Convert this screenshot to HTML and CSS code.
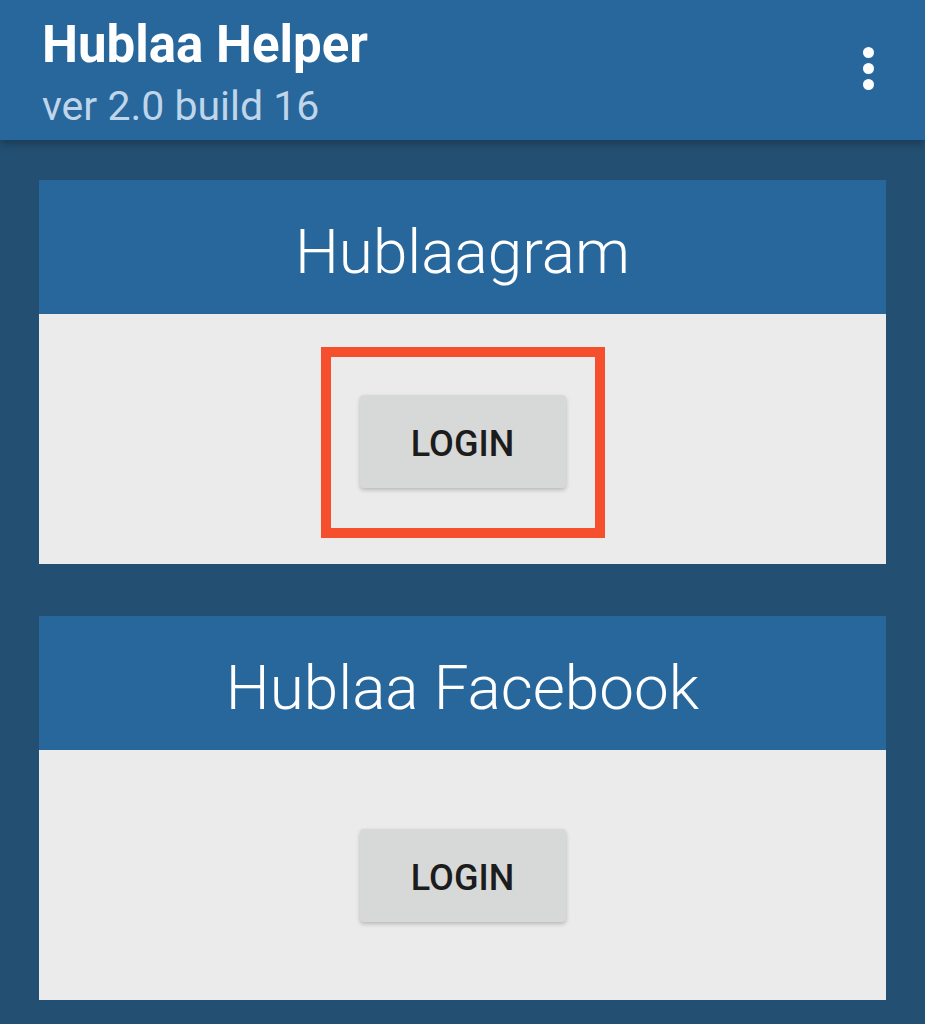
FILE: index.html
```html
<!DOCTYPE html>
<html>
<head>
<meta charset="utf-8">
<link rel="stylesheet" href="styles.css">
</head>
<body>
<header class="appbar">
  <div class="titles">
    <div class="title">Hublaa Helper</div>
    <div class="subtitle">ver 2.0 build 16</div>
  </div>
  <div class="menu"><span></span><span></span><span></span></div>
</header>
<main class="content">
  <section class="card">
    <div class="card-head">Hublaagram</div>
    <div class="card-body">
      <div class="highlight">
        <button class="btn">LOGIN</button>
      </div>
    </div>
  </section>
  <section class="card">
    <div class="card-head">Hublaa Facebook</div>
    <div class="card-body">
      <button class="btn">LOGIN</button>
    </div>
  </section>
</main>
</body>
</html>
```
FILE: styles.css
```css
html, body {
  margin: 0;
  padding: 0;
  height: 100%;
}
body {
  background: #234f72;
  font-family: Roboto, "Noto Sans", sans-serif;
  overflow: hidden;
}
.appbar {
  height: 140px;
  background: #27679c;
  display: flex;
  justify-content: space-between;
  align-items: flex-start;
  padding: 0 42px 0 42px;
  box-sizing: border-box;
  box-shadow: 0 4px 8px rgba(0,0,0,0.25);
  position: relative;
  z-index: 1;
}
.titles {
  padding-top: 16px;
}
.title {
  color: #ffffff;
  font-weight: 700;
  font-size: 51px;
  line-height: 58px;
}
.subtitle {
  color: #bfd5ea;
  font-size: 41px;
  line-height: 48px;
  margin-top: 8px;
}
.menu {
  display: flex;
  flex-direction: column;
  gap: 5px;
  margin-top: 47px;
  margin-right: 9px;
}
.menu span {
  width: 11px;
  height: 11px;
  border-radius: 50%;
  background: #ffffff;
}
.content {
  padding: 40px 39px 0 39px;
  display: flex;
  flex-direction: column;
  gap: 52px;
}
.card {
  display: flex;
  flex-direction: column;
}
.card-head {
  height: 134px;
  background: #27679c;
  color: #ffffff;
  font-weight: 300;
  font-size: 62px;
  display: flex;
  align-items: center;
  justify-content: center;
  padding-top: 8px;
  box-sizing: border-box;
}
.card-body {
  height: 250px;
  background: #ebebeb;
  display: flex;
  align-items: center;
  justify-content: center;
}
.highlight {
  width: 284px;
  height: 191px;
  border: 10px solid #f54f2d;
  box-sizing: border-box;
  display: flex;
  align-items: center;
  justify-content: center;
  margin-top: 6px;
}
.highlight .btn {
  margin-top: -2px;
}
.btn {
  width: 206px;
  height: 93px;
  border: none;
  border-radius: 4px;
  background: #d7d8d8;
  color: #1c1c1c;
  font-family: Roboto, "Noto Sans", sans-serif;
  font-weight: 500;
  font-size: 36px;
  letter-spacing: 0;
  box-shadow: 0 2px 4px rgba(0,0,0,0.22);
  padding: 5px 0 0 0;
}
```
